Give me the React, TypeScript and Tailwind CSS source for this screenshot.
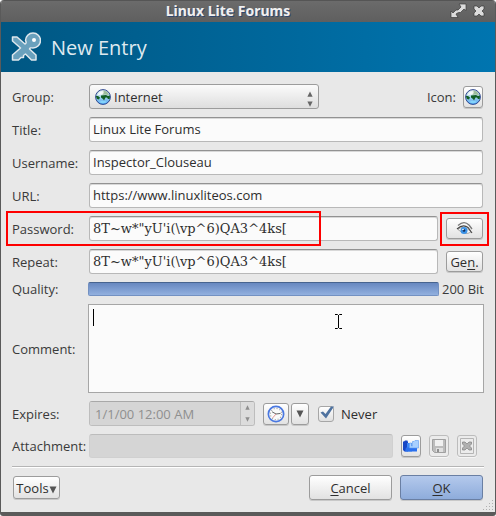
import type { ReactNode } from 'react';

const field =
  'block h-[25px] w-full min-w-0 rounded-[3px] border border-[#b8b8b8] border-t-[#929292] bg-[#fbfbfb] px-[3px] text-[13px] text-[#2e2e2e] shadow-[inset_0_1px_0_#d8d8d8] outline-none';
const sans = 'pb-0.5';
const serif = "font-['DejaVu_Serif',serif]";
const button =
  'flex shrink-0 items-center justify-center rounded-[3px] border border-[#9c9c9c] bg-linear-to-b from-[#ffffff] to-[#e2e2e2] text-[#2e2e2e] shadow-[0_1px_0_#c8c8c8]';
const faded =
  'flex shrink-0 items-center justify-center rounded-[3px] border border-[#bcbcbc] bg-[#ebebeb] shadow-[0_1px_0_#f5f5f5]';

function Globe() {
  return (
    <svg width="16" height="16" viewBox="0 0 16 16" aria-hidden="true" className="shrink-0">
      <defs>
        <linearGradient id="sea" x1="0" y1="0" x2="0" y2="1">
          <stop offset="0" stopColor="#e4eef0" />
          <stop offset="0.4" stopColor="#b9dde8" />
          <stop offset="1" stopColor="#4aa5f8" />
        </linearGradient>
      </defs>
      <circle cx="8" cy="8" r="7.4" fill="url(#sea)" stroke="#2f478f" strokeWidth="1" />
      <path d="M8 1.500 12 2.500 14 6 10 5.500 7 6Z" fill="#9dbd9c" />
      <path d="M.8 7 3 7 5 8.500 4 10.500 2 10Z M6 6.500 11 6 13 7 15 6.500 14.700 10 13 10 12 8.500 10.500 8.500 9 11.500 8 10 6 8.500Z" fill="#115e24" />
      <path d="M2.500 6Q5 1 9 2.500L8 5.500Z" fill="#fff" opacity=".8" />
      <path d="M4 13Q8 10.500 12 13 8 15.500 4 13Z" fill="#8fe0ff" opacity=".7" />
    </svg>
  );
}

function Triangle({ up = false, className }: { up?: boolean; className: string }) {
  return (
    <svg viewBox="0 0 8 8" className={className} aria-hidden="true" preserveAspectRatio="none">
      <path d={up ? 'M4 .5 7.5 7.5H.5Z' : 'M4 7.5 7.5 .5H.5Z'} fill="currentColor" />
    </svg>
  );
}

function Row({ label, id, children }: { label: string; id: string; children: ReactNode }) {
  return (
    <div className="flex items-center">
      <label htmlFor={id} className="w-[77px] shrink-0 leading-[14px]">
        {label}
      </label>
      <div className="flex min-w-0 flex-1 items-center">{children}</div>
    </div>
  );
}

export default function App() {
  return (
    <main className="flex flex-col overflow-hidden rounded-t-[4px] rounded-b-[3px] border-x border-b-4 border-[#5a5a5a] bg-[#e8e8e8] font-['Open_Sans','Noto_Sans',sans-serif] text-[13px] leading-4 text-[#3a3a3a]">
      <header>
        <div className="relative flex h-[22px] items-center justify-center border-t border-[#555] bg-linear-to-b from-[#6b6b6b] to-[#5f5f5f] pr-10 pb-0.5">
          <h1 className="font-['Noto_Sans',sans-serif] text-[14px] font-bold text-[#f0f0f0] [text-shadow:1px_1px_0_#2f466e]">
            Linux Lite Forums
          </h1>
          <div className="absolute right-2.5 flex items-center gap-1.5">
            <button aria-label="Maximize">
              <svg width="17" height="16" viewBox="0 0 17 16" className="block">
                <path
                  d="M9 1H16V7.500L14 6 10.500 9.500 9 9.500 7.500 10 6 11 8 14.500H1V8L3 10 6 7 8 7 11 4Z"
                  fill="#dcdcdc"
                  stroke="#3b3b3b"
                  strokeWidth=".7"
                />
              </svg>
            </button>
            <button aria-label="Close">
              <svg width="12" height="12" viewBox="0 0 12 12" className="block">
                <path
                  d="M1 1H4L6 3 8 1H11V4L9 6 11 8V11H8L6 9 4 11H1V8L3 6 1 4Z"
                  fill="#dcdcdc"
                  stroke="#3b3b3b"
                  strokeWidth=".7"
                />
              </svg>
            </button>
          </div>
        </div>
        <div className="flex h-[50px] items-center gap-2.5 bg-linear-to-r from-[#005783] to-[#0075b0] px-[10px]">
          <svg width="30" height="30" viewBox="0 0 30 30" aria-hidden="true">
            <path
              d="M1.500 5H6L14 12Q16 11 14.500 8.500A7.500 7.500 0 1 1 22 16Q18.500 15.500 18.500 17L25 23V28H20.500L14.500 22 12.500 23.500V25.500H10L7.500 28H1.500V23L9.500 16 1.500 9Z"
              fill="#6aa1bd"
              stroke="#dfe8ed"
              strokeWidth="1.500"
              strokeLinejoin="round"
            />
            <circle cx="23" cy="8" r="2" fill="#fff" />
          </svg>
          <h2 className="pt-0.5 text-[20px] leading-7 text-[#dfe9ef]">New Entry</h2>
        </div>
      </header>

      <form className="flex flex-col gap-2 pt-3 pr-3 pb-3 pl-[11px]" onSubmit={(e) => e.preventDefault()}>
        <Row label="Group:" id="group">
          <div className="relative w-[230px]">
            <select
              id="group"
              className="block h-[25px] w-full appearance-none rounded-[3px] border border-[#9c9c9c] bg-linear-to-b from-[#fbfbfb] to-[#dedede] pl-6 text-[13px] text-[#2e2e2e]"
            >
              <option>Internet</option>
            </select>
            <span className="pointer-events-none absolute inset-y-0 left-1.5 flex items-center">
              <Globe />
            </span>
            <span className="pointer-events-none absolute inset-y-0 right-1.5 flex flex-col items-center justify-center gap-1 pt-1 text-[#666]">
              <Triangle up className="h-1.5 w-1.5" />
              <Triangle className="h-1.5 w-1.5" />
            </span>
          </div>
          <label htmlFor="icon" className="ml-auto">
            Icon:
          </label>
          <button id="icon" type="button" className={`${button} ml-[7px] h-[22px] w-5`}>
            <Globe />
          </button>
        </Row>
        <Row label="Title:" id="title">
          <input id="title" className={`${field} ${sans}`} defaultValue="Linux Lite Forums" />
        </Row>
        <Row label="Username:" id="username">
          <input id="username" className={`${field} ${sans}`} defaultValue="Inspector_Clouseau" />
        </Row>
        <Row label="URL:" id="url">
          <input id="url" className={`${field} ${sans}`} defaultValue="https://www.linuxliteos.com" />
        </Row>
        <div className="relative">
          <Row label="Password:" id="password">
            <input id="password" className={`${field} ${serif}`} defaultValue={'8T~w*"yU\'i(\\vp^6)QA3^4ks['} />
            <div className="relative ml-2 shrink-0">
              <button type="button" aria-label="Show password" className={`${button} h-[21px] w-[37px]`}>
                <svg width="18" height="16" viewBox="0 0 18 16" aria-hidden="true">
                  <path d="M2 8.500Q8 3 15 11 9 15 2 8.500Z" fill="#f8f8f8" stroke="#888" strokeWidth=".7" />
                  <circle cx="8" cy="9.500" r="3.500" fill="#3b93e8" />
                  <circle cx="8" cy="9.500" r="1.300" fill="#0d2a5a" />
                  <circle cx="7" cy="8.500" r=".8" fill="#fff" />
                  <path d="M1 8Q7 2.500 12 6.500L16 12" fill="none" stroke="#444" strokeWidth="1.100" />
                  <path d="M2 4.500Q8-1 13 4L16 8" fill="none" stroke="#777" strokeWidth="1.300" />
                </svg>
              </button>
              <span className="pointer-events-none absolute -inset-x-1.5 -top-1.5 -bottom-[7px] border-2 border-[#fe0000]" />
            </div>
          </Row>
          <span className="pointer-events-none absolute -top-[5px] -bottom-[5px] -left-1.5 w-[315px] border-2 border-[#fe0000]" />
        </div>
        <Row label="Repeat:" id="repeat">
          <input id="repeat" className={`${field} ${serif}`} defaultValue={'8T~w*"yU\'i(\\vp^6)QA3^4ks['} />
          <button type="button" className={`${button} ml-2 h-[21px] w-[37px]`}>
            <span>
              Ge<u className="underline-offset-2">n</u>.
            </span>
          </button>
        </Row>
        <Row label="Quality:" id="quality">
          <div
            id="quality"
            role="meter"
            aria-label="Quality"
            aria-valuenow={200}
            aria-valuemax={200}
            className="-ml-px h-3.5 flex-1 rounded-[2px] border border-[#7391c2] border-t-[#47648f] bg-linear-to-b from-[#6788c0] to-[#92b0df]"
          />
          <output className="-mr-px w-[45px] text-right leading-[14px] whitespace-nowrap">200 Bit</output>
        </Row>
        <Row label="Comment:" id="comment">
          <div className="relative -mx-px flex-1">
            <textarea
              id="comment"
              className="block h-[89px] w-full resize-none border border-[#a6a6a6] bg-[#fbfbfb] px-1 outline-none"
            />
            <span className="absolute top-[5px] left-[5px] h-[17px] w-px bg-black" />
            <svg width="9" height="15" viewBox="0 0 9 15" aria-hidden="true" className="absolute top-2.5 left-[62%]">
              <path d="M1 .5H3.500L4.500 1.500 5.500 .5H8M1 14.500H3.500L4.500 13.500 5.500 14.500H8M4.500 1V14" fill="none" stroke="#000" />
            </svg>
          </div>
        </Row>
        <Row label="Expires:" id="expires">
          <div className="flex h-[25px] w-[166px] overflow-hidden rounded-[3px] border border-[#bdbdbd] border-t-[#a8a8a8]">
            <input
              id="expires"
              disabled
              className="min-w-0 flex-1 bg-[#d5d5d5] px-[5px] text-[13px] text-[#8f8f8f]"
              defaultValue="1/1/00 12:00 AM"
            />
            <span className="flex w-3.5 flex-col items-center justify-between border-l border-[#bdbdbd] bg-[#dcdcdc] py-[3px] text-[#8d8d8d]">
              <Triangle up className="h-[5px] w-[5px]" />
              <Triangle className="h-[5px] w-[5px]" />
            </span>
          </div>
          <button type="button" aria-label="Presets" className={`${button} ml-2 h-[22px] w-[26px]`}>
            <svg width="18" height="18" viewBox="0 0 16 16" aria-hidden="true">
              <circle cx="8" cy="8" r="6.800" fill="#fafafa" stroke="#4a78e0" strokeWidth="1.500" />
              <circle cx="8" cy="8" r="5" fill="none" stroke="#aaa" strokeWidth="1" strokeDasharray="1 1.600" />
              <path d="M4.500 6 8 8 12 7.500" fill="none" stroke="#555" strokeWidth=".8" />
              <path d="M8 8 5 11.500" stroke="#e08a8a" strokeWidth=".8" />
            </svg>
          </button>
          <button type="button" aria-label="More presets" className={`${button} ml-0.5 h-[22px] w-[18px]`}>
            <Triangle className="h-2 w-2 text-[#555]" />
          </button>
          <label className="ml-[9px] flex items-center gap-[7px] text-[#2e2e2e]">
            <span className="relative h-4 w-4">
              <input
                type="checkbox"
                defaultChecked
                className="peer block h-4 w-4 appearance-none rounded-[3px] border border-[#a6a6a6] bg-linear-to-b from-[#fff] to-[#e0e0e0]"
              />
              <svg
                viewBox="0 0 16 16"
                className="pointer-events-none absolute inset-0 hidden h-4 w-4 peer-checked:block"
                aria-hidden="true"
              >
                <path d="M2.500 6.500 5 5.500 7.500 8 13 .5H16L8 12.500Z" fill="#4f729f" />
              </svg>
            </span>
            Never
          </label>
        </Row>
        <Row label="Attachment:" id="attachment">
          <input
            id="attachment"
            disabled
            className="h-[24px] min-w-0 flex-1 rounded-[3px] border border-[#d0d0d0] border-t-[#bcbcbc] bg-[#d5d5d5]"
          />
          <div className="mr-1.5 ml-2 flex gap-2">
            <button type="button" aria-label="Open attachment" className={`${button} h-[22px] w-5`}>
              <svg width="16" height="14" viewBox="0 0 16 14" aria-hidden="true" className="shrink-0">
                <path d="M0 2.500H1L2 1.500H4.500V2.500H5V12.500H1.500L0 11Z" fill="#1746c4" />
                <path d="M4 4H9V12.500H4Z" fill="#3b86f5" />
                <path d="M3 8.500H14V12.500H2Z" fill="#2a70ee" />
                <path d="M9.500 2.500H11L12 1.500H15.500V9H6.500V4H8.500V7H9.500Z" fill="#a9d0ff" stroke="#5e9cf0" strokeWidth=".6" />
              </svg>
            </button>
            <button type="button" disabled aria-label="Save attachment" className={`${faded} h-[22px] w-5`}>
              <svg width="14" height="14" viewBox="0 0 14 14" aria-hidden="true">
                <path d="M.5 .5H13.500V13.500H2.500L.5 11.500Z" fill="#bcbcbc" stroke="#a0a0a0" />
                <path d="M3 1H11V7H3Z" fill="#f0f0f0" />
                <path d="M4 9H11V13H4Z" fill="#e0e0e0" />
                <path d="M5 10H7V13H5Z" fill="#8f8f8f" />
              </svg>
            </button>
            <button type="button" disabled aria-label="Delete attachment" className={`${faded} h-[22px] w-5`}>
              <svg width="14" height="16" viewBox="0 0 14 16" aria-hidden="true">
                <path d="M.5 .5H13.500V15.500H.5Z" fill="#ececec" stroke="#b5b5b5" />
                <path
                  d="M2.500 4H5L7 6 9 4H11.500V6L9.500 8 11.500 10V12H9L7 10 5 12H2.500V10L4.500 8 2.500 6Z"
                  fill="#b0b0b0"
                  stroke="#808080"
                  strokeWidth=".7"
                />
              </svg>
            </button>
          </div>
        </Row>
        <hr className="-mr-px border-t border-[#b5b5b5] shadow-[0_1px_0_#fff]" />
        <div className="flex items-center gap-2">
          <button type="button" className={`${button} mr-auto ml-px h-[23px] w-[47px]`}>
            Tools
            <Triangle className="mt-1 h-2 w-2 text-[#555]" />
          </button>
          <button type="button" className={`${button} h-[25px] w-[83px]`}>
            <span>
              <u className="underline-offset-2">C</u>ancel
            </span>
          </button>
          <button
            type="submit"
            className="flex h-[25px] w-[83px] items-center justify-center rounded-[3px] border border-[#6a7fa3] bg-linear-to-b from-[#b4c9ec] to-[#8eacdb] text-[#2e2e2e] shadow-[0_1px_0_#c8c8c8]"
          >
            <span>
              <u className="underline-offset-2">O</u>K
            </span>
          </button>
        </div>
      </form>
      <svg width="12" height="12" viewBox="0 0 12 12" aria-hidden="true" className="-mt-3 mr-px self-end">
        <path
          d="M10 0h1v1h-1zM7 3h1v1H7zM10 3h1v1h-1zM4 6h1v1H4zM7 6h1v1H7zM10 6h1v1h-1zM1 9h1v1H1zM4 9h1v1H4zM7 9h1v1H7zM10 9h1v1h-1z"
          fill="#b0b0b0"
        />
      </svg>
    </main>
  );
}
